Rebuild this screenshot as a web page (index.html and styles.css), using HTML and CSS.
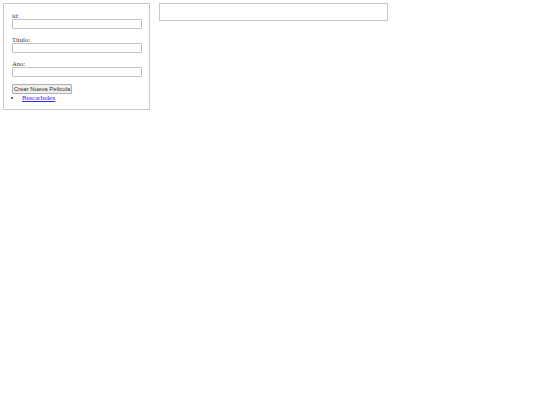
FILE: index.html
```html
<!DOCTYPE html>
<html lang="es">
<head>
<meta charset="utf-8">
<title>Peliculas</title>
<link rel="stylesheet" href="styles.css">
</head>
<body>
<div class="layout">
  <div class="panel">
    <form class="form">
      <div class="field">
        <label class="label" for="id">id:</label>
        <input class="input" id="id" type="text">
      </div>
      <div class="field">
        <label class="label" for="titulo">Título:</label>
        <input class="input" id="titulo" type="text">
      </div>
      <div class="field">
        <label class="label" for="ano">Ano:</label>
        <input class="input" id="ano" type="text">
      </div>
      <button class="button" type="button">Crear Nueva Pelicula</button>
    </form>
    <ul class="links">
      <li><a class="link" href="#">BuscarIndex</a></li>
    </ul>
  </div>
  <div class="result"></div>
</div>
</body>
</html>
```

FILE: styles.css
```css
html, body {
  margin: 0;
  padding: 0;
  background: #ffffff;
}

body {
  padding: 3px;
  font-family: "Liberation Serif", "Times New Roman", serif;
  font-size: 6.6px;
  color: #333;
}

.layout {
  display: flex;
  align-items: flex-start;
  gap: 9px;
}

.panel {
  width: 147px;
  height: 107px;
  box-sizing: border-box;
  border: 1px solid #c8c8c8;
  padding: 8px 8px 0 8px;
}

.form {
  margin: 0;
  display: flex;
  flex-direction: column;
  align-items: flex-start;
}

.field {
  display: flex;
  flex-direction: column;
  margin-bottom: 7px;
}

.label {
  display: block;
  line-height: 7px;
  height: 7px;
  font-size: 6.6px;
}

.input {
  width: 130px;
  height: 10px;
  box-sizing: border-box;
  margin: 0;
  padding: 0;
  border: 1px solid #c2c2c2;
  border-radius: 1px;
  background: #fff;
  font-size: 7px;
}

.button {
  width: 60px;
  height: 10px;
  box-sizing: border-box;
  padding: 0;
  border: 1px solid #b0b0b0;
  border-radius: 1px;
  background: #efefef;
  font-family: "Liberation Sans", Arial, sans-serif;
  font-size: 6px;
  line-height: 8px;
  white-space: nowrap;
  color: #333;
}

.links {
  margin: 0;
  padding-left: 10px;
  font-size: 6.6px;
  line-height: 8px;
}

.link {
  color: #2a2aee;
  text-decoration: underline;
}

.result {
  width: 229px;
  height: 18px;
  box-sizing: border-box;
  border: 1px solid #c8c8c8;
}
```
